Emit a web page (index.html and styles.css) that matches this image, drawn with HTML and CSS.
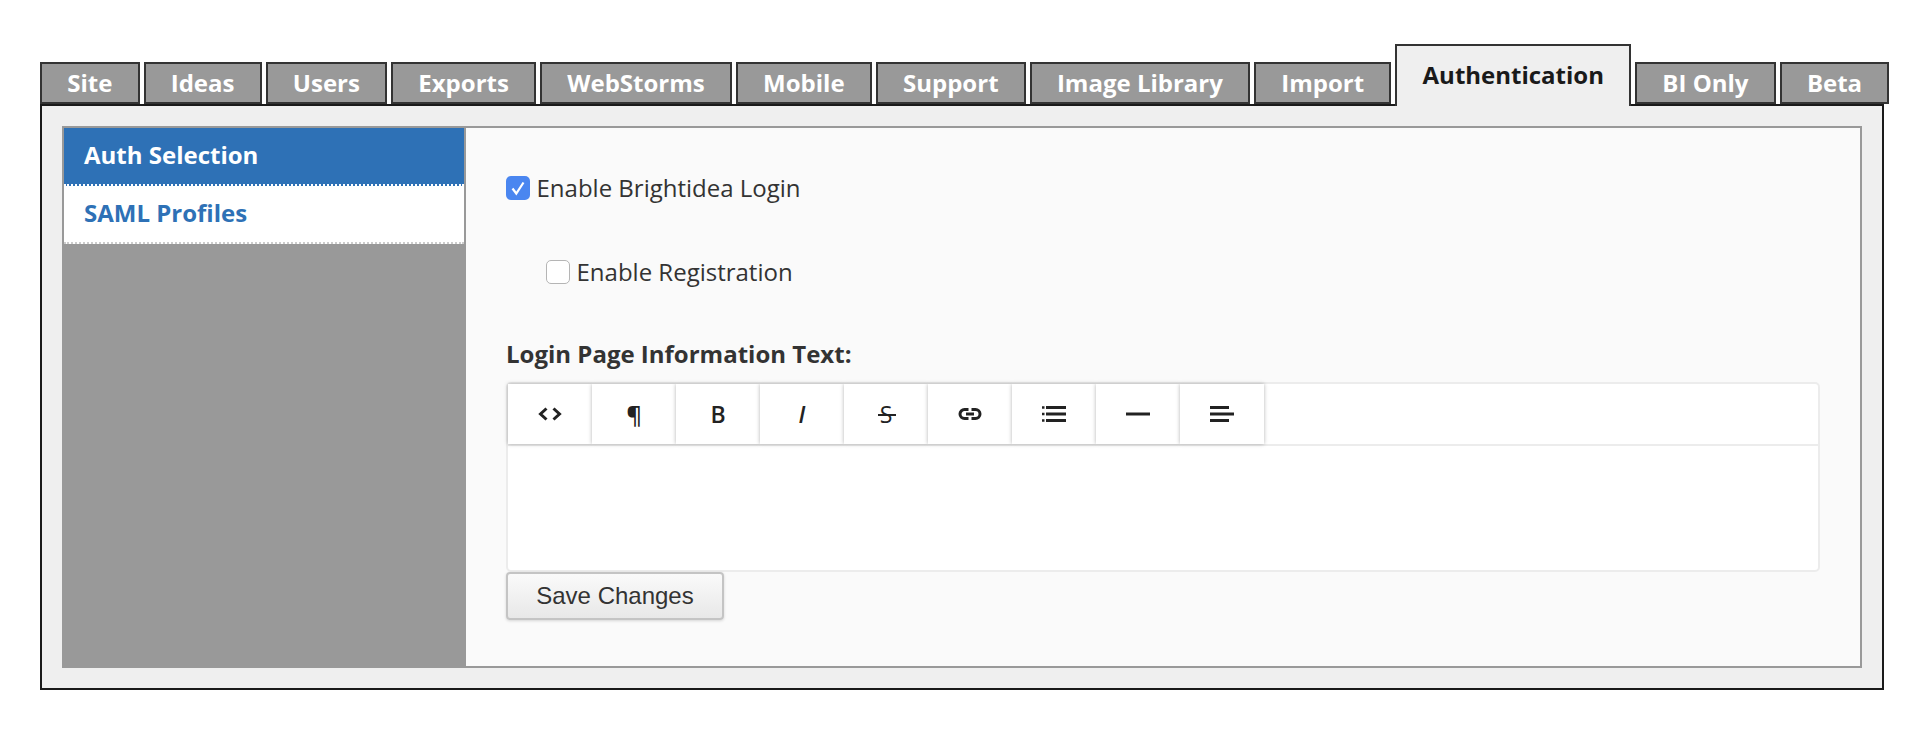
FILE: index.html
```html
<!DOCTYPE html>
<html lang="en">
<head>
<meta charset="utf-8">
<title>Authentication</title>
<link rel="stylesheet" href="styles.css">
</head>
<body>
<div class="page">
  <nav class="tabs">
    <a class="tab">Site</a>
    <a class="tab">Ideas</a>
    <a class="tab">Users</a>
    <a class="tab">Exports</a>
    <a class="tab">WebStorms</a>
    <a class="tab">Mobile</a>
    <a class="tab">Support</a>
    <a class="tab">Image Library</a>
    <a class="tab">Import</a>
    <a class="tab tab-active">Authentication</a>
    <a class="tab">BI Only</a>
    <a class="tab">Beta</a>
  </nav>
  <section class="panel">
    <div class="inner">
      <aside class="side">
        <a class="side-item side-active">Auth Selection</a>
        <a class="side-item">SAML Profiles</a>
      </aside>
      <main class="content">
        <label class="check check-main">
          <span class="box box-on"><svg viewBox="0 0 24 24" width="24" height="24"><path d="M6.500 12.500l3.800 5L17.500 6.500" fill="none" stroke="#fff" stroke-width="2.200"/></svg></span>
          Enable Brightidea Login
        </label>
        <label class="check check-sub">
          <span class="box"></span>
          Enable Registration
        </label>
        <div class="field-label">Login Page Information Text:</div>
        <div class="editor">
          <div class="toolbar">
            <button class="tool"><svg viewBox="0 0 24 24" width="24" height="24"><path d="M8.500 6.500L2.500 12l6 5.500M15.500 6.500l6 5.500-6 5.500" fill="none" stroke="#222" stroke-width="3"/></svg></button>
            <button class="tool tool-para">¶</button>
            <button class="tool tool-bold">B</button>
            <button class="tool tool-italic">I</button>
            <button class="tool tool-strike">S</button>
            <button class="tool"><svg viewBox="0 0 24 24" width="24" height="24"><path d="M10.500 7.500H6.500a4.500 4.500 0 0 0 0 9h4M13.500 7.500h4a4.500 4.500 0 0 1 0 9h-4M8 12h8" fill="none" stroke="#222" stroke-width="3"/></svg></button>
            <button class="tool"><svg viewBox="0 0 24 24" width="24" height="24"><path d="M4 5.500h20M4 12h20M4 18.500h20" stroke="#222" stroke-width="3"/><path d="M0 5.500h2.500M0 12h2.500M0 18.500h2.500" stroke="#222" stroke-width="2.500"/></svg></button>
            <button class="tool"><svg viewBox="0 0 24 24" width="24" height="24"><path d="M0 12h24" stroke="#222" stroke-width="3"/></svg></button>
            <button class="tool"><svg viewBox="0 0 24 24" width="24" height="24"><path d="M0 5.500h19M0 12h24M0 18.500h19" stroke="#222" stroke-width="3"/></svg></button>
          </div>
          <div class="edit-area"></div>
        </div>
        <button class="save">Save Changes</button>
      </main>
    </div>
  </section>
</div>
</body>
</html>
```
FILE: styles.css
```css
* { box-sizing: border-box; }
html, body { margin: 0; background: #fff; }
body { font-family: "Open Sans", sans-serif; color: #333; }
.page { padding: 44px 42px 52px 40px; }

.tabs { display: flex; align-items: flex-end; gap: 4px; height: 60px; width: 1850px; }
.tab {
  height: 42px; padding: 0 25.2px; background: #999; color: #fff;
  border: 2px solid #333;
  font-size: 24px; font-weight: 700; line-height: 37px; white-space: nowrap;
}
.tab-active {
  position: relative; z-index: 1; height: 62px; margin-bottom: -2px;
  background: #efefef; color: #1a1a1a; border-bottom: 0; line-height: 58px;
}

.panel { width: 1844px; height: 586px; padding: 20px; background: #efefef; border: 2px solid #1a1a1a; }
.inner { display: flex; height: 542px; border: 2px solid #999; background: #fafafa; }
.side { width: 402px; flex: none; background: #999; border-right: 2px solid #999; }
.side-item {
  display: block; height: 58px; padding: 0 20px; background: #fff; color: #2e71b6;
  border-bottom: 2px dotted #ccc;
  font-size: 24px; font-weight: 700; line-height: 54px;
}
.side-active { background: #2e71b6; color: #fff; border-bottom-color: #fff; }

.content { flex: 1; min-width: 0; padding: 48px 40px 0 40px; }
.check { display: flex; align-items: center; gap: 6.5px; font-size: 24px; line-height: 22px; color: #333; }
.check-sub { margin: 60px 0 0 40px; }
.box { width: 24px; height: 24px; flex: none; background: #fff; border: 1.5px solid #b5b5b5; border-radius: 5px; }
.box-on { background: #4a86f0; border: 0; display: block; }
.box svg { display: block; }
.field-label { margin-top: 55px; font-size: 24px; font-weight: 700; line-height: 30px; color: #333; }

.editor { margin-top: 13px; height: 190px; background: #fff; border: 2px solid #ececec; border-radius: 5px; }
.toolbar { display: flex; height: 62px; border-bottom: 2px solid #ececec; }
.tool {
  position: relative; display: flex; align-items: center; justify-content: center; width: 84px; height: 60px; padding: 0;
  background: #fff; border: 0; box-shadow: 0 0 4px rgba(0,0,0,.3);
  color: #222; font-family: "Open Sans", sans-serif; font-size: 23px; font-weight: 600;
}
.tool-para { font-size: 24px; font-weight: 600; }
.tool-italic { font-style: italic; }
.tool-strike { font-weight: 400; }
.tool-strike::after {
  content: ""; position: absolute; left: 34px; top: 30px; width: 18px; height: 2px; background: #222;
}

.save {
  display: block; width: 218px; height: 48px; padding: 0;
  background: linear-gradient(#fafafa, #e8e8e8); border: 2px solid #c4c4c4; border-radius: 4px;
  box-shadow: 0 1px 3px rgba(0,0,0,.15); color: #333;
  font-family: "Liberation Sans", sans-serif; font-size: 24px;
}
```
